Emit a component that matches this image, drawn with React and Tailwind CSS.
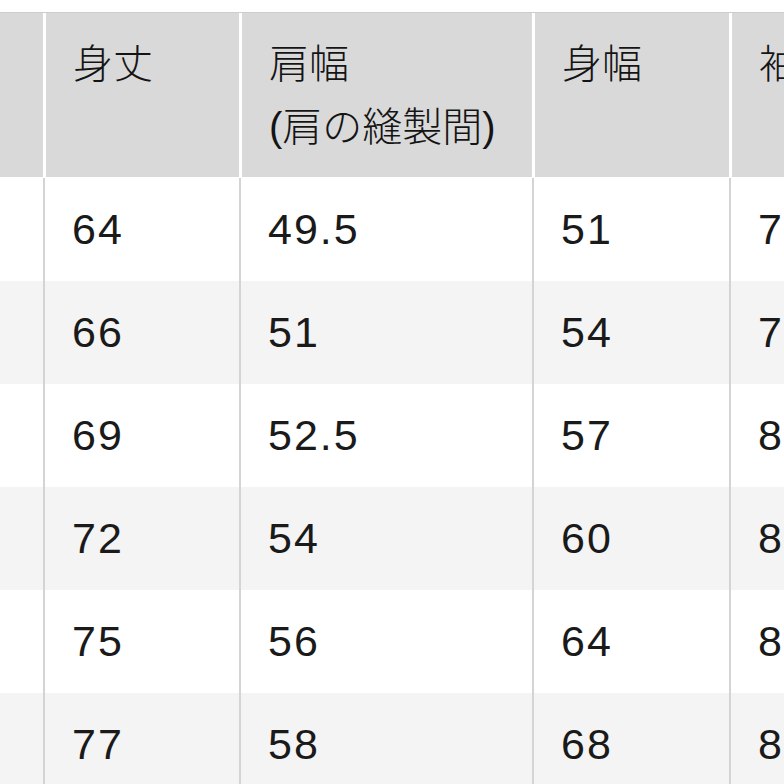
const COLS = 'grid grid-cols-[43px_196px_293px_197px_200px]';

const rows = [
    ['64', '49.5', '51', '71'],
    ['66', '51', '54', '79'],
    ['69', '52.5', '57', '81'],
    ['72', '54', '60', '84'],
    ['75', '56', '64', '86'],
    ['77', '58', '68', '88'],
];

function HeaderCell({ children }) {
    return (
        <div className="border-l-[3px] border-white pl-[27px] pt-[20px] text-[40px] font-light leading-[63px] text-[#141414]">
            {children}
        </div>
    );
}

export default function App() {
    return (
        <div
            className="h-[784px] w-[784px] overflow-hidden bg-white pt-[12px]"
            style={{ fontFamily: '"Liberation Sans", "Noto Sans CJK JP", sans-serif' }}
        >
            <div className={`${COLS} h-[166px] border-t border-b border-t-[#cdcdcd] border-b-white bg-[#d9d9d9]`}>
                <div />
                <HeaderCell>身丈</HeaderCell>
                <HeaderCell>
                    肩幅
                    <br />
                    (肩の縫製間)
                </HeaderCell>
                <HeaderCell>身幅</HeaderCell>
                <HeaderCell>袖丈</HeaderCell>
            </div>

            {rows.map((row, i) => (
                <div
                    key={i}
                    className={`${COLS} h-[103px] ${i % 2 === 1 ? 'bg-[#f4f4f4]' : 'bg-white'}`}
                >
                    <div />
                    {row.map((value, j) => (
                        <div
                            key={j}
                            className="flex items-center border-l-2 border-[#d4d4d4] pl-[27px] text-[43px] tracking-[2px] text-[#1a1a1a]"
                        >
                            {value}
                        </div>
                    ))}
                </div>
            ))}
        </div>
    );
}
